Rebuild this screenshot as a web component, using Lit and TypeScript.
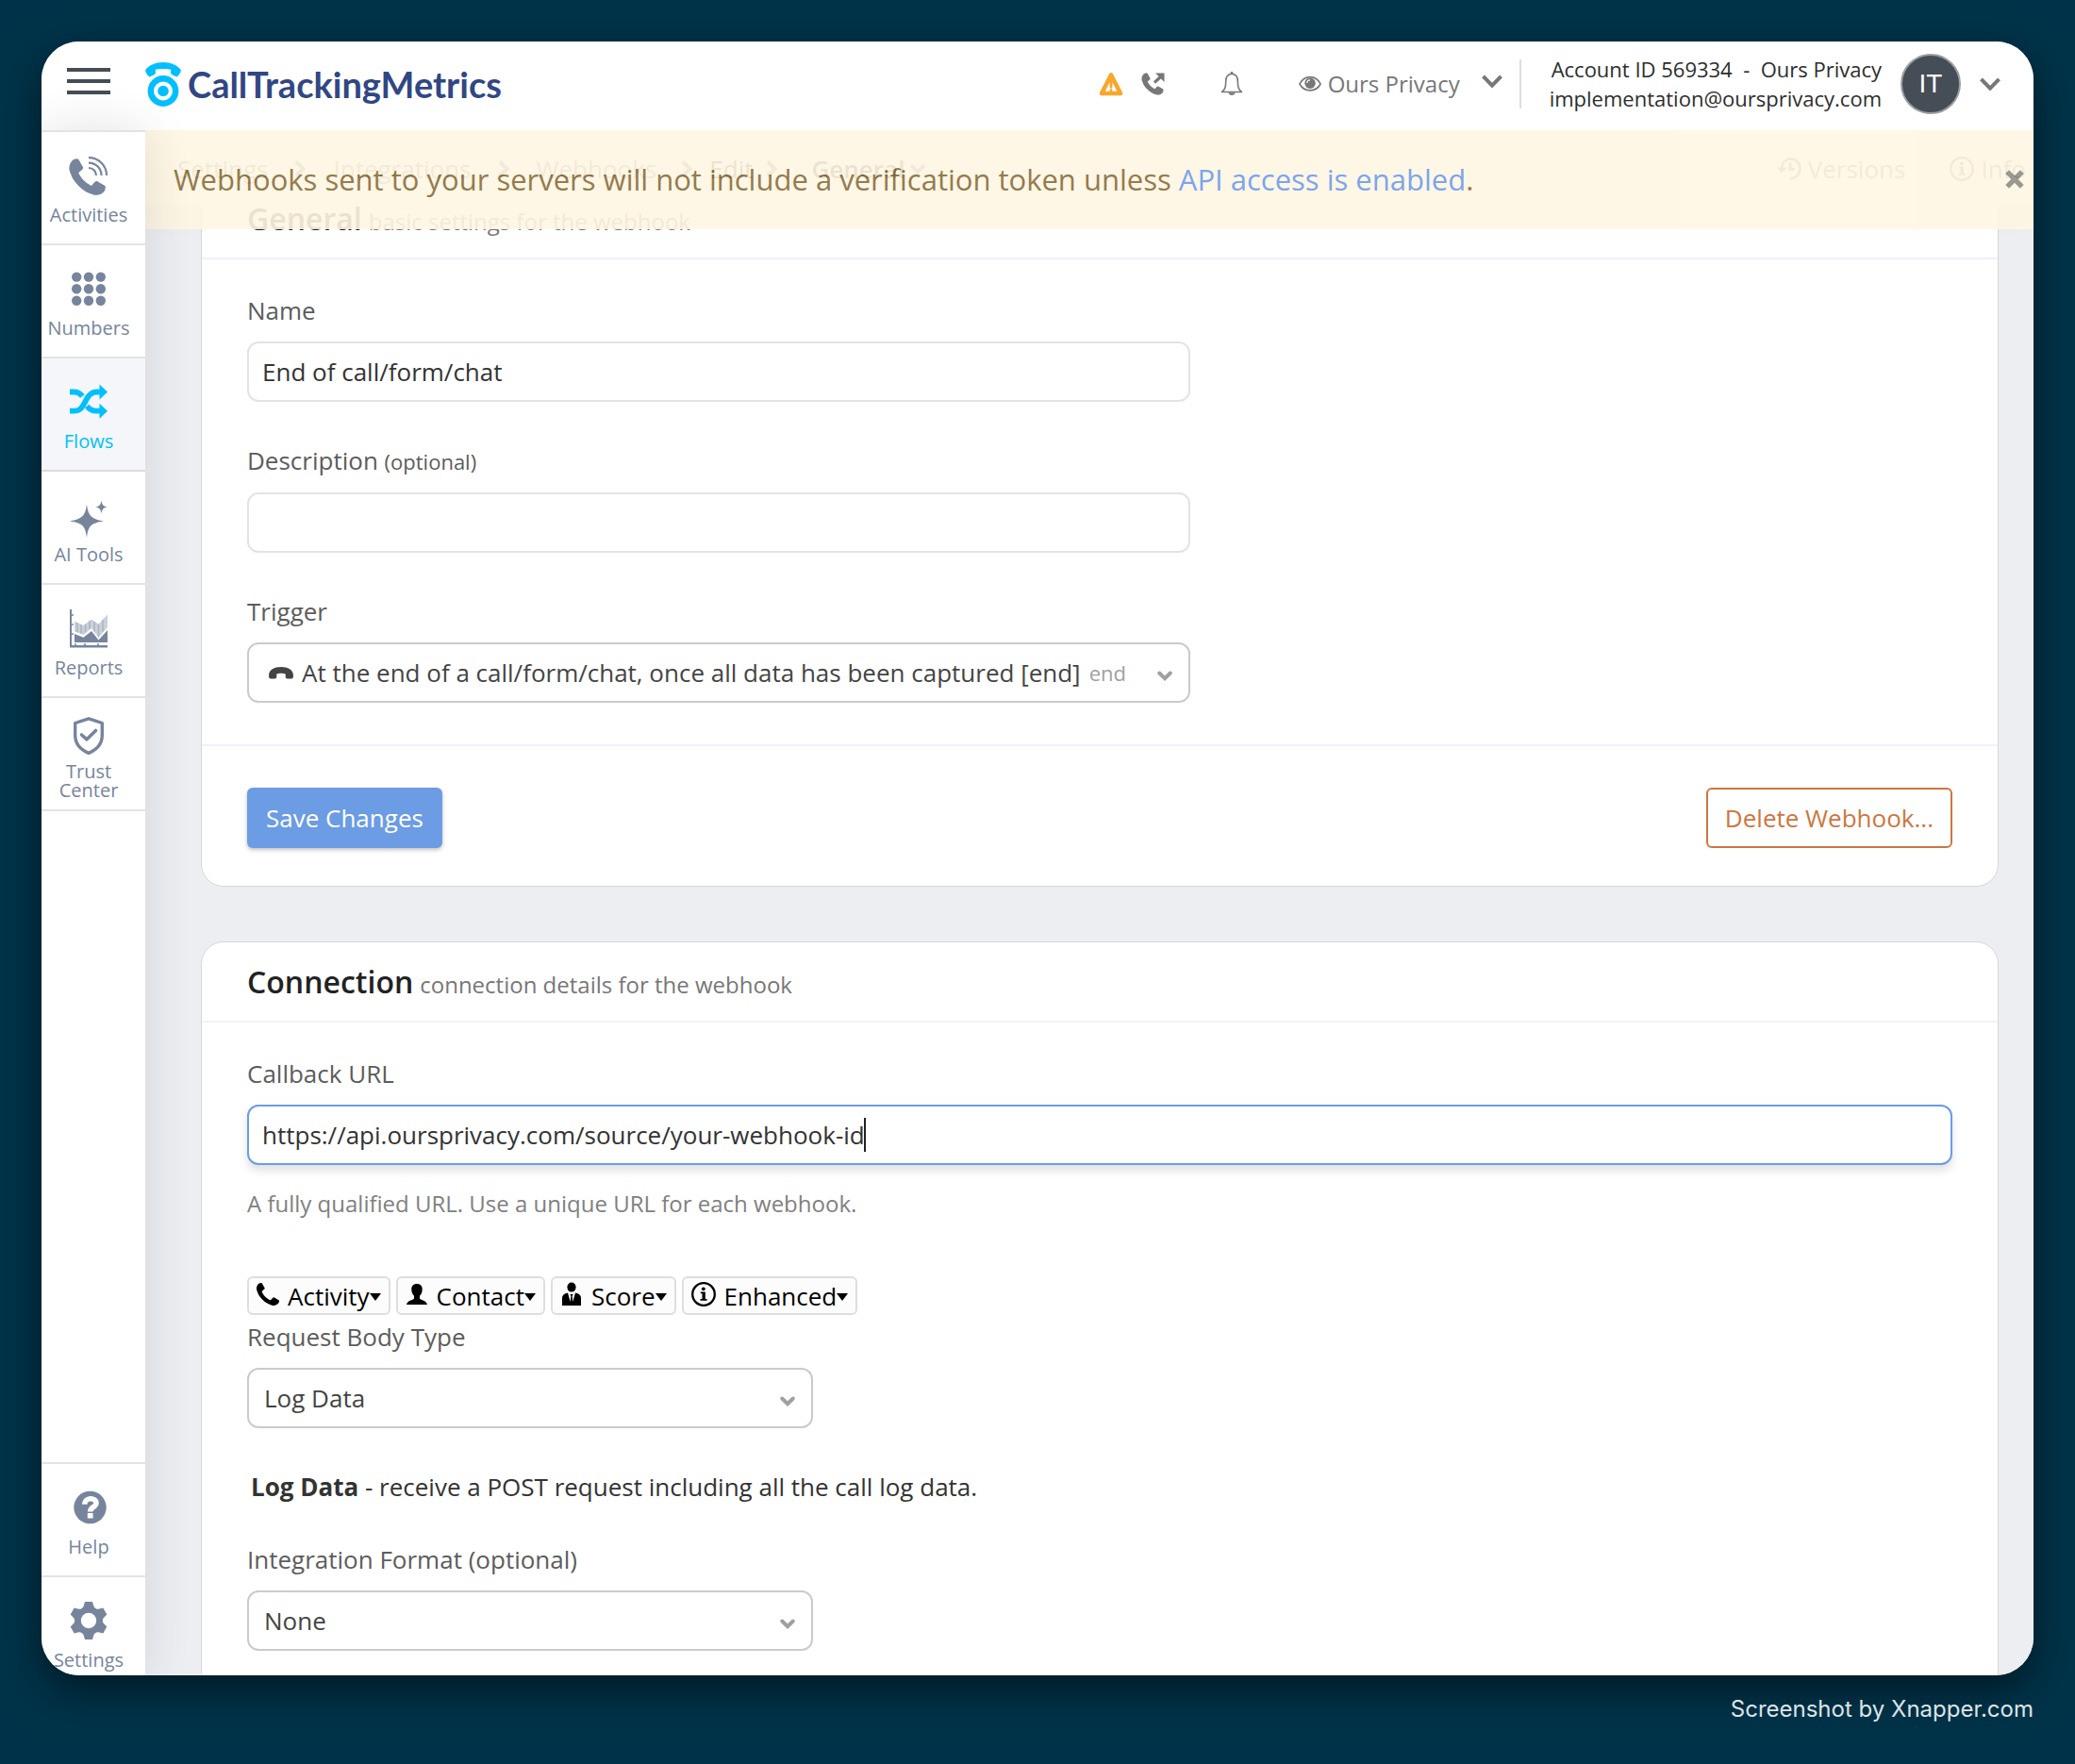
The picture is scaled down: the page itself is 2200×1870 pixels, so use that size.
import { LitElement, html, css, svg } from "lit";
import { customElement, property } from "lit/decorators.js";

const PHONE =
  "M1408 1112q0 27-10 70.5t-21 68.5q-21 50-122 106-94 51-186 51-27 0-53-3.5t-57.5-12.5-47-14.5-55.5-20.5-49-18q-98-35-175-83-127-79-264-216t-216-264q-48-77-83-175-3-9-18-49t-20.5-55.5-14.5-47-12.5-57.5-3.5-53q0-92 51-186 56-101 106-122 25-11 68.5-21t70.5-10q14 0 21 3 18 6 53 76 11 19 30 54t35 63.5 31 53.5q3 4 17.5 25t21.5 35.5 7 28.5q0 20-28.5 50t-62 55-62 53-28.5 46q0 9 5 22.5t8.5 20.5 14 24 11.5 19q76 137 174 235t235 174q2 1 19 11.5t24 14 20.5 8.5 22.5 5q18 0 46-28.5t53-62 55-62 50-28.5q14 0 28.5 7t35.5 21.5 25 17.5q25 15 53.5 31t63.5 35 54 30q70 35 76 53 3 7 3 21z";

/** Icon table: view box size followed by the shapes. */
const ICONS: Record<string, { w: number; h: number; body: unknown }> = {
  menu: { w: 46, h: 28, body: svg`<path fill="currentColor" d="M0 0h46v4H0zM0 12h46v4H0zM0 24h46v4H0z"/>` },
  logo: {
    w: 38, h: 47,
    body: svg`<circle cx="19" cy="30.5" r="13.2" fill="none" stroke="currentColor" stroke-width="6.4"/>
      <circle cx="19" cy="30.5" r="5.8" fill="currentColor"/>
      <path fill="currentColor" d="M.3 8C4 3 11 0 19 0s15 3 18.700 8c.6 2-2 6.200-4.200 7.400-2.200-.4-5-2-6.500-3.600l.2-4C24 6.600 14 6.600 10.800 7.800l.2 4c-1.500 1.600-4.300 3.200-6.500 3.600C2.300 14.200-.3 10 .3 8z"/>`,
  },
  activities: {
    w: 40, h: 40,
    body: svg`<g transform="translate(0 3) scale(.0264)"><path fill="currentColor" stroke="currentColor" stroke-width="50" d="${PHONE}"/></g>
      <g fill="none" stroke="currentColor" stroke-width="2.200"><path d="M20 1.100A19 18.500 0 0 1 39 20"/><path d="M20 6.600A13.500 13 0 0 1 33.500 20"/><path d="M20 12A8 8 0 0 1 28 20"/></g>`,
  },
  numbers: {
    w: 40, h: 40,
    body: svg`<g fill="currentColor">${[7.2, 20, 32.8].map((x) => [7.6, 20.2, 32.8].map((y) => svg`<circle cx="${x}" cy="${y}" r="5.200"/>`))}</g>`,
  },
  flows: {
    w: 40, h: 40,
    body: svg`<g fill="none" stroke="currentColor" stroke-width="5.800"><path d="M0 29.700h4.500C12 29.700 14 24 16.500 19.500 19 14 22 9.500 28 9.500h5"/><path d="M0 9.500h4.500c4.200 0 6.700 1.800 8.800 4.500"/><path d="M18.200 24.500c2.500 3.300 5 5.200 9.800 5.200h5"/></g>
      <path fill="currentColor" d="M31.500 1.500 40 9.500l-8.500 8zM31.500 21.700l8.500 8-8.500 8z"/>`,
  },
  ai: {
    w: 40, h: 40,
    body: svg`<path fill="currentColor" d="M18 8.500C19.500 20 22 24 36 26.500 22 28.500 19.500 32 18 44 16.500 32 14 28.500 0 26.500 14 24 16.500 20 18 8.500zM33.500 4.500c.7 4.700 2 6.200 6.500 7-4.500.8-5.800 2.200-6.500 7-.7-4.800-2-6.200-6.500-7 4.500-.8 5.800-2.300 6.500-7z"/>`,
  },
  reports: {
    w: 40, h: 40,
    body: svg`<path fill="currentColor" d="M0 0h2v38h38v2.500H0z"/><path stroke="currentColor" stroke-width="1.500" d="M1 6h3M1 16h3M1 26h3M6 39v-3M16 39v-3M30 39v-3"/>
      <path fill="currentColor" d="M5 26l9.500 3.800L23 23l7.500 9.500L40 22v13H5z"/>
      <path fill="currentColor" opacity=".38" d="M5 12.500l9.500 4.500L23 10.500l7.500 5L40 5.500v13.500L30.500 30 23 20l-8.500 7L5 23.500z"/>
      <path stroke="currentColor" opacity=".35" stroke-width="1.600" d="M8 14v10M12 16v9.500M16.500 15.500v9M21 12v9M26 13v10.500M30.500 16v13M35 11v12.500"/>`,
  },
  trust: {
    w: 40, h: 40,
    body: svg`<g fill="none" stroke="currentColor" stroke-linejoin="round"><path stroke-width="3.400" d="M20 1.800 34.300 6.500v13.300c0 9-5.300 14.700-14.300 18.600-9-3.900-14.300-9.600-14.300-18.600V6.500z"/><path stroke-width="3.600" stroke-linecap="round" d="M12.500 19l5.500 4.800L27.500 14.500"/></g>`,
  },
  help: {
    w: 40, h: 40,
    body: svg`<circle cx="21.500" cy="20" r="17.200" fill="currentColor"/><path fill="none" stroke="#fff" stroke-width="5.600" d="M15.700 16.800c0-8 12.300-7.600 12.300-1.500 0 4.800-6.300 4-6.300 9.200"/><path fill="#fff" d="M18.800 26h5.800v5.600h-5.800z"/>`,
  },
  settings: {
    w: 40, h: 40,
    body: svg`<g fill="currentColor"><circle cx="20" cy="20" r="14.200"/>${[0, 60, 120, 180, 240, 300].map(
      (a) => svg`<path transform="rotate(${a} 20 20)" d="M16 0h8l1.500 5c.8 2 2.500 3 4.500 3.200H10C12 8 13.700 7 14.500 5z"/>`,
    )}</g><circle cx="20" cy="20" r="8.200" fill="#fff"/>`,
  },
  warning: {
    w: 26, h: 26,
    body: svg`<path fill="none" stroke="currentColor" stroke-width="4.600" stroke-linejoin="round" d="M13 3.500 3 23h20z"/><path fill="currentColor" d="M11.300 9h3.400l-.5 8.500h-2.400z"/><circle cx="13" cy="19.500" r="1.500" fill="currentColor"/>`,
  },
  outgoing: {
    w: 24, h: 24,
    body: svg`<g transform="translate(0 1) scale(.0156)"><path fill="currentColor" stroke="currentColor" stroke-width="70" d="${PHONE}"/></g><path fill="currentColor" d="M14 .5h9.500V10z"/><path stroke="currentColor" stroke-width="3.200" d="M13 10.500 20.500 3.500"/>`,
  },
  bell: {
    w: 24, h: 26,
    body: svg`<path fill="none" stroke="currentColor" stroke-width="1.600" stroke-linejoin="round" d="M12 2.300c-4.600.5-6.300 4-6.300 7.700 0 6.500-.9 9-4.200 11.500h21c-3.300-2.500-4.200-5-4.200-11.500 0-3.700-1.700-7.200-6.300-7.700z"/><path fill="currentColor" d="M10.800 0h2.400v3h-2.400zM8.500 22.300h7c-.3 3.600-6.700 3.600-7 0z"/>`,
  },
  eye: {
    w: 24, h: 18,
    body: svg`<path fill="none" stroke="currentColor" stroke-width="1.600" d="M.9 9C6-.8 18-.8 23.100 9 18 18.200 6 18.200.9 9z"/><circle cx="12" cy="8.200" r="5.700" fill="currentColor"/><path fill="none" stroke="#fff" stroke-width="1.200" d="M8.800 8c0-2 1.200-3.200 3.200-3.200"/>`,
  },
  chevron: { w: 22, h: 15, body: svg`<path fill="none" stroke="currentColor" stroke-width="4" d="M1.500 1.800 11 11.700l9.500-9.900"/>` },
  caret: { w: 16, h: 11, body: svg`<path fill="none" stroke="currentColor" stroke-width="4" stroke-linecap="round" d="M2.200 2.500 8 8.200l5.800-5.700"/>` },
  crumb: { w: 12, h: 18, body: svg`<path fill="none" stroke="currentColor" stroke-width="4" d="M2 1.500 9.500 9 2 16.500"/>` },
  close: { w: 20, h: 20, body: svg`<path stroke="currentColor" stroke-width="5.400" d="M2.200 2.200l15.600 15.600M17.800 2.200 2.200 17.800"/>` },
  history: {
    w: 26, h: 26,
    body: svg`<path fill="none" stroke="currentColor" stroke-width="2.600" d="M5 12.500C5.500 6 9.500 2.500 14.500 2.500c5.600 0 10 4.400 10 10.300s-4.400 10.500-10.500 10.500"/><path fill="currentColor" d="M0 11.500h10.500L5.200 17.500z"/><path fill="none" stroke="currentColor" stroke-width="3" d="M14 6.500v7h5"/>`,
  },
  info: {
    w: 26, h: 26,
    body: svg`<circle cx="13" cy="13" r="11.800" fill="none" stroke="currentColor" stroke-width="2.300"/><circle cx="12.800" cy="7.300" r="1.900" fill="currentColor"/><path fill="currentColor" d="M9.800 10.500h5v7.500h1.800v1.700H9.500V18h2v-5.800H9.800z"/>`,
  },
  hangup: {
    w: 26, h: 13,
    body: svg`<path fill="currentColor" d="M0 9C0 3 6 0 13 0s13 3 13 9c0 2.500-.6 3.500-2 3.500h-4c-1.600 0-2.300-.8-2.300-2.200V7.600c-2.400-1.300-7-1.300-9.400 0v2.700c0 1.400-.7 2.200-2.300 2.200H2C.6 12.500 0 11.500 0 9z"/>`,
  },
  phone: { w: 24, h: 24, body: svg`<g transform="translate(0 0) scale(.0170)"><path fill="currentColor" d="${PHONE}"/></g>` },
  person: {
    w: 24, h: 24,
    body: svg`<path fill="currentColor" d="M12 1c4 0 6 2.600 5.700 6.200-.2 3.300-1.200 5-2.700 6.600v2.600c1 2 7.500 2 8 6.700H1c.5-4.700 7-4.700 8-6.700v-2.600C7.500 12.200 6.500 10.500 6.300 7.200 6 3.600 8 1 12 1z"/>`,
  },
  suit: {
    w: 24, h: 24,
    body: svg`<ellipse cx="12" cy="4.600" rx="4.600" ry="5" fill="currentColor"/><path fill="currentColor" d="M8 10.500 10.700 20l.7-6-1-2h3.200l-1 2 .7 6L16 10.500c4 1 6 2.500 6 5.500v8H2v-8c0-3 2-4.500 6-5.500z"/>`,
  },
};

const icon = (name: string, cls = "") => {
  const i = ICONS[name];
  return html`<svg class="icon ${cls}" width=${i.w} height=${i.h} viewBox="0 0 ${i.w} ${i.h}" aria-hidden="true">${i.body}</svg>`;
};

const base = css`
  *, *::before, *::after { box-sizing: border-box; }
  button, input, select { font: inherit; color: inherit; margin: 0; }
  button { cursor: pointer; }
  a { color: inherit; text-decoration: none; }
  .icon { display: block; flex: none; overflow: visible; }
`;

@customElement("app-header")
class AppHeader extends LitElement {
  static styles = [base, css`
    :host { box-sizing: border-box; display: flex; align-items: center; height: 94px; padding: 0 35px 4px 27px; background: #fff; color: #777; }
    .plain { display: flex; align-items: center; background: none; border: 0; padding: 0; }
    .menu { color: #454d56; padding-bottom: 6px; }
    .brand { display: flex; align-items: center; gap: 7px; margin-left: 37px; color: #00bfff; }
    .word { font: 700 38px/48px Lato, "Noto Sans", sans-serif; color: #314784; }
    .tools { display: flex; align-items: center; margin-left: auto; }
    .warn { color: #faa62b; margin-right: 20px; }
    .bell { margin: 0 59px; }
    .view { gap: 7px; font-size: 24px; line-height: 32px; }
    .drop { margin: 0 18px 6px 16px; }
    .account { display: flex; align-items: center; gap: 20px; padding-left: 30px; border-left: 2px solid #ddd; height: 52px; }
    .who { font-size: 22px; line-height: 31px; color: #2d2d2d; text-align: right; white-space: pre; }
    .avatar { display: grid; place-items: center; width: 64px; height: 64px; border-radius: 50%; background: #454d56; border: 2px solid #9b9fa4; color: #fff; font: 28px/32px "Liberation Sans", sans-serif; }
  `];
  render() {
    return html`
      <button class="plain menu" aria-label="Menu">${icon("menu")}</button>
      <a class="brand" href="#">${icon("logo")}<span class="word">CallTrackingMetrics</span></a>
      <div class="tools">
        <button class="plain warn" aria-label="Alerts">${icon("warning")}</button>
        <button class="plain" aria-label="Dialer">${icon("outgoing")}</button>
        <button class="plain bell" aria-label="Notifications">${icon("bell")}</button>
        <button class="plain view">${icon("eye")}<span>Ours Privacy</span>${icon("chevron", "drop")}</button>
        <div class="account">
          <div class="who">Account ID 569334  -  Ours Privacy
implementation@oursprivacy.com</div>
          <span class="avatar">IT</span>
          <button class="plain" aria-label="Account menu">${icon("chevron")}</button>
        </div>
      </div>`;
  }
}

@customElement("app-sidebar")
class AppSidebar extends LitElement {
  static styles = [base, css`
    :host { display: flex; flex-direction: column; justify-content: space-between; background: #fff; color: #76859c; border-top: 2px solid #e3e3e3; box-shadow: 0 0 50px rgba(40, 50, 70, .14); }
    .item { display: flex; flex-direction: column; align-items: center; gap: 12px; height: 120px; padding: 26px 10px 0 0; border-bottom: 2px solid #e3e3e3; font-size: 20px; line-height: 20px; text-align: center; }
    .two { padding-top: 20px; gap: 8px; }
    .two span { width: 80px; }
    .on { background: #f4f6f9; color: #00bfff; border-color: #d9dce0; }
    .foot { border-top: 2px solid #e3e3e3; }
    .foot .item:last-child { height: 104px; border: 0; }
  `];
  private item(name: string, label: string, cls = "") {
    return html`<a class="item ${cls}" href="#">${icon(name)}<span>${label}</span></a>`;
  }
  render() {
    return html`
      <nav>
        ${this.item("activities", "Activities")}${this.item("numbers", "Numbers")}${this.item("flows", "Flows", "on")}
        ${this.item("ai", "AI Tools")}${this.item("reports", "Reports")}${this.item("trust", "Trust Center", "two")}
      </nav>
      <nav class="foot">${this.item("help", "Help")}${this.item("settings", "Settings")}</nav>`;
  }
}

@customElement("app-panel")
class AppPanel extends LitElement {
  @property() heading = "";
  @property() note = "";
  static styles = [base, css`
    :host { display: block; background: #fff; border: 1px solid #d6d7db; border-radius: 24px; }
    .head { display: flex; align-items: baseline; gap: 7px; padding: 20px 48px 16px; border-bottom: 2px solid #eef1fe; }
    h2 { margin: 0; font-size: 32px; line-height: 44px; font-weight: 600; color: #222; }
    .note { font-size: 24px; line-height: 44px; color: #777; }
  `];
  render() {
    return html`<div class="head"><h2>${this.heading}</h2><span class="note">${this.note}</span></div><slot></slot>`;
  }
}

@customElement("app-root")
class AppRoot extends LitElement {
  static styles = [base, css`
    :host { box-sizing: border-box; display: flex; flex-direction: column; height: 100vh; padding: 44px 44px 40px; background: #003349; font-family: "Open Sans", "Noto Sans", sans-serif; font-size: 26px; line-height: 36px; color: #333; }
    .window { flex: 1; min-height: 0; display: flex; flex-direction: column; overflow: hidden; border-radius: 40px; background: #fff; }
    .shade { flex: 1; min-height: 0; display: flex; flex-direction: column; border-radius: 40px; box-shadow: 0 16px 44px rgba(0, 0, 0, .5); }
    .body { flex: 1; min-height: 0; display: grid; grid-template: minmax(0, 1fr) / 110px minmax(0, 1fr); position: relative; }
    app-sidebar { position: relative; z-index: 3; }
    main { background: #edeef2; overflow: hidden; }
    .bar { position: relative; z-index: 1; display: flex; align-items: center; height: 80px; padding: 2px 8px 0 34px; background: #fff; color: #777; box-shadow: 0 4px 40px rgba(0, 0, 0, .06); }
    .bar b { font-weight: 600; color: #333; }
    .crumbs { display: flex; align-items: center; }
    .sep { margin: 0 29px 0 28px; }
    .tight { margin: 0 18px 0 26px; }
    .wide { margin: 0 36px 0 14px; }
    .down { margin-left: 6px; }
    .dark { color: #333; }
    .extra { display: flex; gap: 47px; margin-left: auto; }
    .extra a { display: flex; align-items: center; gap: 7px; }
    .banner { position: absolute; z-index: 2; top: 0; left: 110px; right: 0; height: 105px; display: flex; align-items: center; justify-content: space-between; padding: 0 10px 2px 30px; background: #fff7e3; color: #8a6d3b; opacity: .9; font-size: 31px; line-height: 44px; }
    .banner a { color: #6f9cea; }
    .banner button { background: none; border: 0; padding: 0; color: #8f8f83; }
    .cards { display: flex; flex-direction: column; gap: 58px; margin: -29px 37px 0 59px; }
    .form { padding: 36px 48px 44px; }
    .field { display: flex; flex-direction: column; gap: 15px; }
    .field + .field { margin-top: 44px; }
    .half { max-width: 1000px; }
    label { color: #5c5c5c; }
    small { font-size: 22px; }
    .box { display: flex; align-items: center; width: 100%; height: 64px; border: 2px solid #e3e3e3; border-radius: 12px; background: #fff; padding: 0 14px; outline: 0; }
    .url { position: relative; }
    .url .box { border-color: #6c9ce6; box-shadow: 0 6px 10px rgba(0, 0, 0, .12); }
    .cursor { position: absolute; left: 654px; top: 14px; width: 2px; height: 36px; background: #222; }
    .pick { border-color: #cbcbcb; padding: 0 17px 0 16px; color: #444; }
    .pick select { appearance: none; background: none; border: 0; padding: 0; outline: 0; flex: 1; height: 100%; }
    .pick .icon:last-child { color: #a0a0a0; margin-top: 6px; }
    .rich { padding-left: 21px; gap: 9px; }
    .rich select { flex: none; field-sizing: content; }
    .rich .end { flex: 1; font-size: 22px; color: #a0a0a0; }
    .narrow { max-width: 600px; }
    .actions { display: flex; justify-content: space-between; padding: 44px 48px 40px; border-top: 2px solid #f0f1fd; }
    .btn { height: 64px; border-radius: 6px; padding: 0 20px; border: 0; }
    .save { background: #6c9ce3; color: #fff; box-shadow: 0 2px 4px rgba(0, 0, 0, .25); }
    .delete { background: #fff; color: #cc7640; border: 2px solid #cc7640; padding: 0 18px; }
    .hint { margin: 23px 0 0; font-size: 24px; color: #808080; }
    .tags { display: flex; gap: 6px; margin: 59px 0 5px; }
    .tag { display: flex; align-items: center; height: 41px; padding: 0 8px; border: 2px solid #dedede; border-radius: 6px; background: #fcfcfc; color: #000; }
    .tag .icon { margin: 0 9px 4px 0; }
    .tag::after { content: ""; border: 6px solid transparent; border-top: 8px solid #000; border-bottom: 0; margin-top: 3px; }
    .about { margin: 44px 4px 41px; }
    .mark { margin: 18px 0 0; text-align: right; font: 400 24px/36px Inter, sans-serif; color: #dce4e8; }
  `];

  private select(id: string, value: string) {
    return html`<div class="box pick"><select id=${id}><option>${value}</option></select>${icon("caret")}</div>`;
  }
  private tag(name: string, label: string) {
    return html`<button class="tag">${icon(name)}${label}</button>`;
  }

  render() {
    return html`
      <div class="shade"><div class="window">
        <app-header></app-header>
        <div class="body">
          <app-sidebar></app-sidebar>
          <main>
            <div class="bar">
              <div class="crumbs">
                <a href="#">Settings</a>${icon("crumb", "sep")}<a href="#">Integrations</a>${icon("crumb", "sep")}<a href="#">Webhooks</a>${icon("crumb", "tight")}
                <span class="dark">Edit</span>${icon("crumb", "wide")}<b>General</b>${icon("caret", "down")}
              </div>
              <div class="extra"><a href="#">${icon("history")}Versions</a><a href="#">${icon("info")}Info</a></div>
            </div>
            <div class="cards">
              <app-panel heading="General" note="basic settings for the webhook">
                <div class="form">
                  <div class="field half"><label for="name">Name</label><input class="box" id="name" .value=${"End of call/form/chat"} /></div>
                  <div class="field half"><label for="desc">Description <small>(optional)</small></label><input class="box" id="desc" /></div>
                  <div class="field half">
                    <label for="trigger">Trigger</label>
                    <div class="box pick rich">
                      ${icon("hangup")}<select id="trigger"><option>At the end of a call/form/chat, once all data has been captured [end]</option></select><span class="end">end</span>${icon("caret")}
                    </div>
                  </div>
                </div>
                <div class="actions"><button class="btn save">Save Changes</button><button class="btn delete">Delete Webhook...</button></div>
              </app-panel>
              <app-panel heading="Connection" note="connection details for the webhook">
                <div class="form">
                  <div class="field">
                    <label for="url">Callback URL</label>
                    <div class="url"><input class="box" id="url" .value=${"https://api.oursprivacy.com/source/your-webhook-id"} /><span class="cursor"></span></div>
                  </div>
                  <p class="hint">A fully qualified URL. Use a unique URL for each webhook.</p>
                  <div class="tags">${this.tag("phone", "Activity")}${this.tag("person", "Contact")}${this.tag("suit", "Score")}${this.tag("info", "Enhanced")}</div>
                  <div class="field narrow"><label for="type">Request Body Type</label>${this.select("type", "Log Data")}</div>
                  <p class="about"><b>Log Data</b> - receive a POST request including all the call log data.</p>
                  <div class="field narrow"><label for="format">Integration Format (optional)</label>${this.select("format", "None")}</div>
                </div>
              </app-panel>
            </div>
          </main>
          <div class="banner" role="alert">
            <span>Webhooks sent to your servers will not include a verification token unless <a href="#">API access is enabled</a>.</span>
            <button aria-label="Dismiss">${icon("close")}</button>
          </div>
        </div>
      </div></div>
      <p class="mark">Screenshot by Xnapper.com</p>`;
  }
}
